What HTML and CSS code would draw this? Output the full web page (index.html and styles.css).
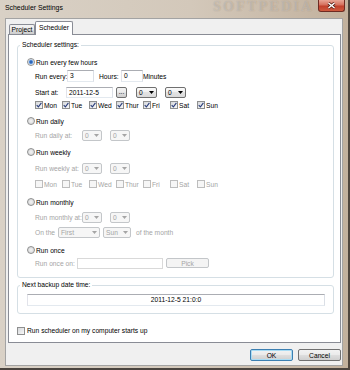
FILE: index.html
```html
<!DOCTYPE html>
<html lang="en">
<head>
    <meta charset="UTF-8">
    <title>Scheduler Settings</title>
    <link rel="stylesheet" href="styles.css">
</head>
<body>
    <div class="window">
        <div class="titlebar">
            <span class="title">Scheduler Settings</span>
            <span class="watermark">SOFTPEDIA</span>
            <span class="close">
                <svg width="9" height="7" viewBox="0 0 9 7">
                    <path d="M1.5 1L7.5 6M7.5 1L1.5 6" stroke="#5a2219" stroke-width="3" fill="none"/>
                    <path d="M1.5 1L7.5 6M7.5 1L1.5 6" stroke="#fff" stroke-width="1.5" fill="none"/>
                </svg>
            </span>
        </div>
        <div class="client">
            <div class="tabs">
                <div class="tab">Project</div>
                <div class="tab active">Scheduler</div>
            </div>
            <div class="panel">
                <fieldset class="group">
                    <legend>Scheduler settings:</legend>
                    <div class="options">
                        <div class="opt"><span class="radio on"></span>Run every few hours</div>
                        <div class="sub mt2">
                            <span class="lbl w-every">Run every:</span>
                            <span class="tb w27">3</span>
                            <span class="lbl w-hours">Hours:</span>
                            <span class="tb w22">0</span>
                            <span class="lbl">Minutes</span>
                        </div>
                        <div class="sub mt4">
                            <span class="lbl w-start">Start at:</span>
                            <span class="tb w47 short">2011-12-5</span>
                            <span class="btn dots">...</span>
                            <span class="combo w21 first-combo">0<svg width="5" height="3" viewBox="0 0 5 3"><path d="M0 0h5L2.5 3z"/></svg></span>
                            <span class="combo w21 next-combo">0<svg width="5" height="3" viewBox="0 0 5 3"><path d="M0 0h5L2.5 3z"/></svg></span>
                        </div>
                        <div class="sub days mt1">
                            <span class="day"><span class="cb on"><svg viewBox="0 0 6 6"><path d="M0.7 3.1L2.4 4.9L5.4 0.9"/></svg></span>Mon</span>
                            <span class="day"><span class="cb on"><svg viewBox="0 0 6 6"><path d="M0.7 3.1L2.4 4.9L5.4 0.9"/></svg></span>Tue</span>
                            <span class="day"><span class="cb on"><svg viewBox="0 0 6 6"><path d="M0.7 3.1L2.4 4.9L5.4 0.9"/></svg></span>Wed</span>
                            <span class="day"><span class="cb on"><svg viewBox="0 0 6 6"><path d="M0.7 3.1L2.4 4.9L5.4 0.9"/></svg></span>Thur</span>
                            <span class="day"><span class="cb on"><svg viewBox="0 0 6 6"><path d="M0.7 3.1L2.4 4.9L5.4 0.9"/></svg></span>Fri</span>
                            <span class="day"><span class="cb on"><svg viewBox="0 0 6 6"><path d="M0.7 3.1L2.4 4.9L5.4 0.9"/></svg></span>Sat</span>
                            <span class="day"><span class="cb on"><svg viewBox="0 0 6 6"><path d="M0.7 3.1L2.4 4.9L5.4 0.9"/></svg></span>Sun</span>
                        </div>

                        <div class="opt mt4"><span class="radio"></span>Run daily</div>
                        <div class="sub dis mt2">
                            <span class="lbl w-at">Run daily at:</span>
                            <span class="combo w20">0<svg width="5" height="3" viewBox="0 0 5 3"><path d="M0 0h5L2.5 3z"/></svg></span>
                            <span class="combo w20 next-combo">0<svg width="5" height="3" viewBox="0 0 5 3"><path d="M0 0h5L2.5 3z"/></svg></span>
                        </div>

                        <div class="opt mt5"><span class="radio"></span>Run weekly</div>
                        <div class="sub dis mt4">
                            <span class="lbl w-at">Run weekly at:</span>
                            <span class="combo w20">0<svg width="5" height="3" viewBox="0 0 5 3"><path d="M0 0h5L2.5 3z"/></svg></span>
                            <span class="combo w20 next-combo">0<svg width="5" height="3" viewBox="0 0 5 3"><path d="M0 0h5L2.5 3z"/></svg></span>
                        </div>
                        <div class="sub days dis mt4">
                            <span class="day"><span class="cb"></span>Mon</span>
                            <span class="day"><span class="cb"></span>Tue</span>
                            <span class="day"><span class="cb"></span>Wed</span>
                            <span class="day"><span class="cb"></span>Thur</span>
                            <span class="day"><span class="cb"></span>Fri</span>
                            <span class="day"><span class="cb"></span>Sat</span>
                            <span class="day"><span class="cb"></span>Sun</span>
                        </div>

                        <div class="opt mt6"><span class="radio"></span>Run monthly</div>
                        <div class="sub dis mt3">
                            <span class="lbl w-at">Run monthly at:</span>
                            <span class="combo w20">0<svg width="5" height="3" viewBox="0 0 5 3"><path d="M0 0h5L2.5 3z"/></svg></span>
                            <span class="combo w20 next-combo">0<svg width="5" height="3" viewBox="0 0 5 3"><path d="M0 0h5L2.5 3z"/></svg></span>
                        </div>
                        <div class="sub dis mt3">
                            <span class="lbl w-on">On the</span>
                            <span class="combo w42">First<svg width="5" height="3" viewBox="0 0 5 3"><path d="M0 0h5L2.5 3z"/></svg></span>
                            <span class="combo w28 day-combo">Sun<svg width="5" height="3" viewBox="0 0 5 3"><path d="M0 0h5L2.5 3z"/></svg></span>
                            <span class="lbl month">of the month</span>
                        </div>

                        <div class="opt mt6"><span class="radio"></span>Run once</div>
                        <div class="sub dis mt1">
                            <span class="lbl w-once">Run once on:</span>
                            <span class="tb w86 short"></span>
                            <span class="btn pick">Pick</span>
                        </div>
                    </div>
                </fieldset>

                <fieldset class="group next">
                    <legend>Next backup date time:</legend>
                    <div class="display">2011-12-5 21:0:0</div>
                </fieldset>

                <div class="startup"><span class="cb"></span>Run scheduler on my computer starts up</div>
            </div>
            <div class="buttons">
                <span class="btn default">OK</span>
                <span class="btn">Cancel</span>
            </div>
        </div>
    </div>
</body>
</html>
```

FILE: styles.css
```css
* {
    box-sizing: border-box;
}

body {
    margin: 0;
    width: 350px;
    height: 370px;
    overflow: hidden;
    font-family: "Liberation Sans", Arial, sans-serif;
    font-size: 6.7px;
    color: #000;
}

.window {
    display: flex;
    flex-direction: column;
    height: 370px;
    padding: 0 5px 2px 5px;
    background: linear-gradient(to right, #d9d1c6, #d3c8ba 55%, #c2b19d);
    border-right: 2px solid #4f463e;
    border-bottom: 2px solid #4a443f;
}

/* title bar */

.titlebar {
    display: flex;
    align-items: flex-start;
    height: 18px;
}

.title {
    font-size: 6.9px;
    line-height: 16px;
}

.watermark {
    margin-left: auto;
    margin-right: 4px;
    font-family: "Liberation Serif", serif;
    font-weight: bold;
    font-size: 14px;
    letter-spacing: 2.3px;
    line-height: 13px;
    color: rgba(255, 255, 255, 0.3);
    text-shadow: 0 0 1px rgba(90, 70, 50, 0.35);
}

.close {
    display: flex;
    align-items: center;
    justify-content: center;
    width: 27px;
    height: 12px;
    margin-right: -2px;
    border: 1px solid #6e2b22;
    border-top: none;
    border-radius: 0 0 3px 3px;
    background: linear-gradient(#e8a595, #d56f5c 45%, #c1402c 55%, #cf5a3f);
}

/* client area */

.client {
    flex: 1;
    display: flex;
    flex-direction: column;
    background: #f0f0f0;
    border: 1px solid #a3a3a3;
    padding: 2px 1px 4px 2px;
}

.tabs {
    display: flex;
    align-items: flex-end;
    height: 13px;
    padding-left: 1px;
}

.tab {
    width: 26px;
    height: 10px;
    text-align: center;
    line-height: 10px;
    border: 1px solid #898c95;
    border-bottom: none;
    border-radius: 2px 2px 0 0;
    background: linear-gradient(#f3f3f3, #ebebeb 50%, #dddddd 50%, #cdcdcd);
}

.tab.active {
    position: relative;
    z-index: 1;
    width: 38px;
    height: 14px;
    margin-bottom: -1px;
    line-height: 12px;
    background: #fff;
}

.panel {
    display: flex;
    flex-direction: column;
    height: 309px;
    background: #fff;
    border: 1px solid #898c95;
}

/* group boxes */

.group {
    min-width: 0;
    margin: 6px 6px 0 8px;
    padding: 7px 0 8px 2px;
    border: 1px solid #d5dfe5;
    border-radius: 3px;
}

.group legend {
    padding: 0 2px;
    line-height: 8px;
}

.group.next {
    margin-top: 3px;
    padding: 5px 8px 7px 2px;
}

.options {
    padding-left: 7px;
}

.opt,
.sub {
    display: flex;
    align-items: center;
    height: 12px;
}

.sub {
    padding-left: 8px;
}

.mt1 { margin-top: 1px; }
.mt2 { margin-top: 2px; }
.mt3 { margin-top: 3px; }
.mt4 { margin-top: 4px; }
.mt5 { margin-top: 5px; }
.mt6 { margin-top: 6px; }

.dis {
    color: #a5a5a5;
}

.lbl {
    flex: none;
    white-space: nowrap;
}

.w-every { width: 32px; }
.w-hours { width: 22px; margin-left: 5px; }
.w-start { width: 31px; }
.w-at { width: 47px; }
.w-on { width: 23px; }
.w-once { width: 42px; }

.w20 { width: 20px; }
.w21 { width: 21px; }
.w22 { width: 22px; }
.w27 { width: 27px; }
.w28 { width: 28px; }
.w42 { width: 42px; }
.w47 { width: 47px; }
.w86 { width: 86px; }

.month {
    margin-left: 5px;
}

/* controls */

.radio {
    flex: none;
    width: 8px;
    height: 8px;
    margin-right: 1px;
    border: 1px solid #8e8f8f;
    border-radius: 50%;
    background: radial-gradient(circle, #f4f4f4, #cfd0d2);
}

.radio.on {
    background: radial-gradient(circle, #1f4f99 0, #3d7bd0 1.4px, #bcd4f0 2.4px, #f6f6f6 3px);
}

.cb {
    flex: none;
    display: flex;
    align-items: center;
    justify-content: center;
    width: 8px;
    height: 8px;
    margin-right: 1px;
    border: 1px solid #8e8f8f;
    background: linear-gradient(135deg, #d6d8db, #f8f8f8);
}

.cb svg {
    width: 6px;
    height: 6px;
}

.cb path {
    fill: none;
    stroke: #2b3f7c;
    stroke-width: 1.1;
}

.dis .cb {
    border-color: #bdbdbd;
    background: #f6f6f6;
}

.day {
    display: flex;
    align-items: center;
    width: 27px;
    flex: none;
}

.tb {
    flex: none;
    height: 12px;
    padding-left: 2px;
    line-height: 10px;
    background: #fff;
    border: 1px solid;
    border-color: #abadb3 #dbdfe6 #e3e9ef #e2e3ea;
}

.tb.short {
    height: 11px;
    line-height: 9px;
}

.dis .tb {
    border-color: #d9d9d9;
}

.combo {
    flex: none;
    display: flex;
    align-items: center;
    justify-content: space-between;
    height: 11px;
    padding: 0 2px;
    border: 1px solid #707070;
    border-radius: 2px;
    background: linear-gradient(#fbfbfb, #eeeeee 50%, #e3e3e3 50%, #dadada);
}

.combo svg {
    fill: #000;
}

.dis .combo {
    border-color: #c3c6c9;
    background: #f6f6f6;
}

.dis .combo svg {
    fill: #a5a5a5;
}

.first-combo { margin-left: 9px; }
.next-combo { margin-left: 8px; }
.day-combo { margin-left: 3px; }

.btn {
    flex: none;
    display: flex;
    align-items: center;
    justify-content: center;
    width: 43px;
    height: 12px;
    border: 1px solid #707070;
    border-radius: 2px;
    background: linear-gradient(#f2f2f2, #ebebeb 45%, #dddddd 55%, #cfcfcf);
}

.btn.default {
    border-color: #3c7fb1;
    box-shadow: inset 0 0 0 1px #a9dcf4;
}

.btn.dots {
    width: 11px;
    height: 11px;
    margin-left: 3px;
    align-items: flex-end;
    padding-bottom: 2px;
}

.btn.pick {
    height: 10px;
    margin-left: 3px;
    border-color: #c3c6c9;
    background: #f4f4f4;
}

.display {
    height: 12px;
    margin-left: 7px;
    line-height: 10px;
    text-align: center;
    border: 1px solid;
    border-color: #abadb3 #dbdfe6 #e3e9ef #e2e3ea;
}

.startup {
    display: flex;
    align-items: center;
    height: 9px;
    margin: 12px 0 0 8px;
}

.startup .cb {
    margin-right: 2px;
}

.buttons {
    display: flex;
    justify-content: flex-end;
    gap: 5px;
    margin-top: 6px;
}
```
